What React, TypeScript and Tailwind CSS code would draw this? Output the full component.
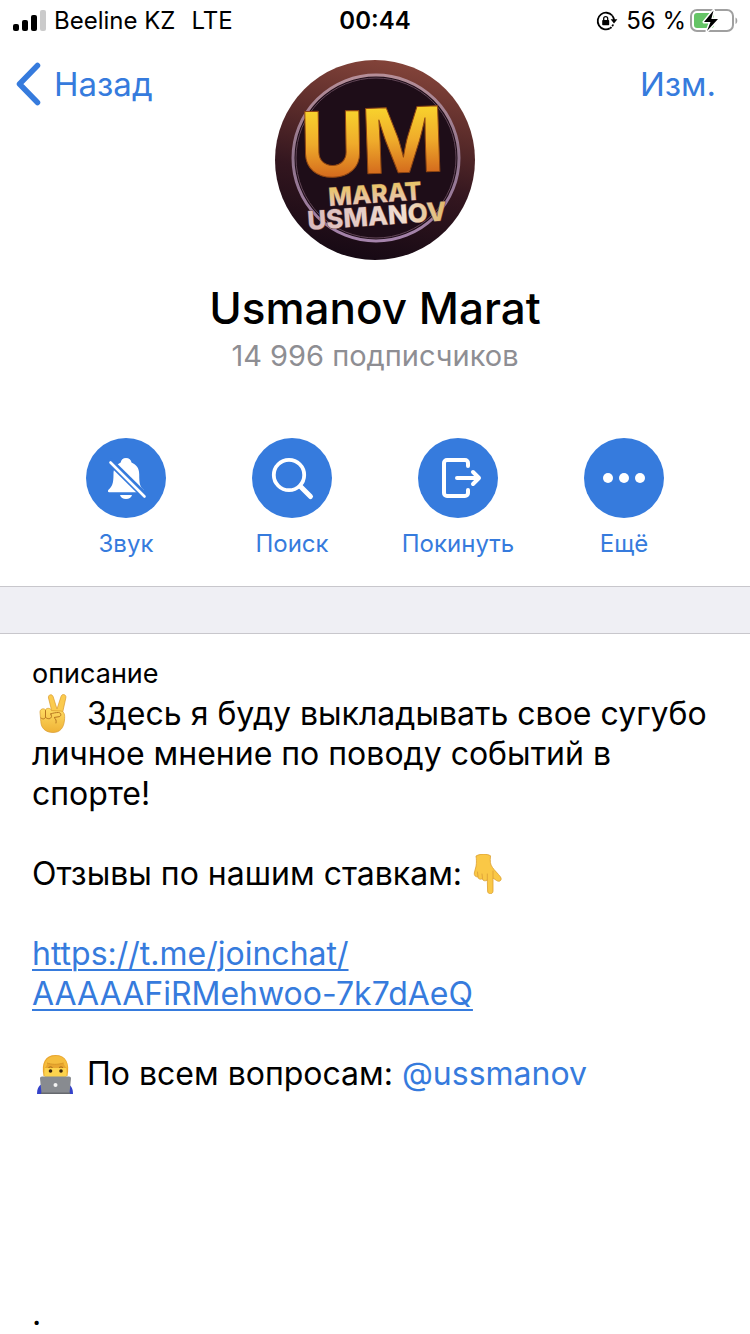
import type { ReactNode } from "react";

function SignalIcon() {
  return (
    <svg width="34" height="22" viewBox="0 0 34 22" aria-hidden="true">
      <rect x="1" y="14" width="6" height="7" rx="2" />
      <rect x="10" y="10" width="6" height="11" rx="2" />
      <rect x="19" y="5" width="6" height="16" rx="2" />
      <rect x="28" y="0" width="6" height="21" rx="2" fill="#cbcbcb" />
    </svg>
  );
}

function RotationLockIcon() {
  return (
    <svg width="22" height="20" viewBox="0 0 22 20" aria-hidden="true">
      <path d="M13.800 17.400A8.300 8.300 0 1 1 16.200 4.500" fill="none" stroke="#000" strokeWidth="1.800" />
      <path d="M16.200 4.500a8.300 8.300 0 0 1 1.900 5.500" fill="none" stroke="#000" strokeWidth="1.800" />
      <path d="M17.200 13.500a8.300 8.300 0 0 1-3.400 3.900" fill="none" stroke="#000" strokeWidth="1.800" strokeDasharray="2 1" />
      <path d="M14.600 8.300h6.800L18 12.400z" />
      <rect x="6.200" y="9" width="7" height="5.200" rx="0.800" />
      <path d="M7.700 9.500V7.600a2 2 0 0 1 4 0v1.900" fill="none" stroke="#000" strokeWidth="1.300" />
    </svg>
  );
}

function BatteryIcon() {
  return (
    <svg width="48" height="24" viewBox="0 0 48 24" aria-hidden="true">
      <rect x="1" y="1" width="42" height="21" rx="6" fill="none" stroke="#a0a0a0" strokeWidth="2" />
      <path d="M45.5 8.5c2.4 1 2.4 5.500 0 6.500z" fill="#a0a0a0" />
      <rect x="4" y="4" width="20" height="15" rx="3" fill="#65c466" />
      <path
        d="M23.500 1.500L14 13h6.500L17 22 28 10h-6.700z"
        fill="#000"
        stroke="#fff"
        strokeWidth="3"
        strokeLinejoin="round"
        paintOrder="stroke"
      />
    </svg>
  );
}

function Avatar() {
  return (
    <svg width="200" height="200" viewBox="0 0 200 200" role="img" aria-label="Usmanov Marat">
      <defs>
        <linearGradient id="rim" x1="0.6" y1="0" x2="0.4" y2="1">
          <stop offset="0" stopColor="#84443a" />
          <stop offset="0.3" stopColor="#5d2d2b" />
          <stop offset="0.6" stopColor="#33161f" />
          <stop offset="1" stopColor="#160914" />
        </linearGradient>
        <linearGradient id="ring" x1="0" y1="0" x2="0" y2="1">
          <stop offset="0" stopColor="#b58e98" />
          <stop offset="0.5" stopColor="#90748c" />
          <stop offset="1" stopColor="#a583ab" />
        </linearGradient>
        <linearGradient id="gold" x1="0" y1="0" x2="0" y2="1">
          <stop offset="0.2" stopColor="#f8d22d" />
          <stop offset="0.5" stopColor="#efab2b" />
          <stop offset="0.8" stopColor="#d46b1d" />
        </linearGradient>
        <linearGradient id="marat" x1="0" y1="0" x2="0" y2="1">
          <stop offset="0.1" stopColor="#e9c45a" />
          <stop offset="0.8" stopColor="#e8c5b5" />
        </linearGradient>
        <linearGradient id="usmanov" x1="0" y1="0" x2="1" y2="0">
          <stop offset="0" stopColor="#d9b9bb" />
          <stop offset="0.7" stopColor="#f0ddd0" />
          <stop offset="1" stopColor="#dfb667" />
        </linearGradient>
      </defs>
      <circle cx="100" cy="100" r="100" fill="url(#rim)" />
      <circle cx="101" cy="98" r="83" fill="#1e0d18" stroke="url(#ring)" strokeWidth="3" />
      <circle cx="101" cy="98" r="80" fill="none" stroke="#624657" strokeWidth="1" />
      <g fontFamily="Inter, sans-serif" fontWeight="700" strokeLinejoin="round">
        <g fontSize="90" fill="url(#gold)" stroke="#8e4512" strokeWidth="1">
          <text x="25" y="117" transform="rotate(-1 25 117)">U</text>
          <text x="87" y="114" transform="rotate(-2 87 114)">M</text>
        </g>
        <g stroke="#5c3a3a" strokeWidth="1" paintOrder="stroke" fontWeight="800">
          <text x="54" y="146" transform="rotate(-4 54 146)" fontSize="25" fill="url(#marat)">MARAT</text>
          <text x="33" y="170" transform="rotate(-4 33 170)" fontSize="26" fill="url(#usmanov)">USMANOV</text>
        </g>
      </g>
    </svg>
  );
}

function MuteIcon() {
  return (
    <svg width="80" height="80" viewBox="0 0 80 80" aria-hidden="true">
      <path
        d="M40 20c-3 0-5 2-5.300 4.400C30 26.500 27.500 30.500 27.500 36c0 10-1.500 12.500-4.500 15.200-1.500 1.400-1.500 3 .8 3h32.400c2.300 0 2.300-1.600.8-3-3-2.700-3.800-5.200-3.800-15.200 0-5.500-2.500-9.500-7.700-11.600C45.200 22 43 20 40 20z"
        fill="#fff"
      />
      <path d="M34 57h12c-.7 2.500-3 4-6 4s-5.300-1.500-6-4z" fill="#fff" />
      <path d="M23 22.500l38 37.500" stroke="#367bdd" strokeWidth="7" />
      <path d="M24.500 24.500l34 34" stroke="#fff" strokeWidth="2.600" strokeLinecap="round" />
    </svg>
  );
}

function SearchIcon() {
  return (
    <svg width="80" height="80" viewBox="0 0 80 80" fill="none" stroke="#fff" aria-hidden="true">
      <circle cx="37" cy="37" r="15.200" strokeWidth="3.800" />
      <path d="M48.500 48.500l10 10" strokeWidth="5" strokeLinecap="round" />
    </svg>
  );
}

function LeaveIcon() {
  return (
    <svg
      width="80"
      height="80"
      viewBox="0 0 80 80"
      fill="none"
      stroke="#fff"
      strokeWidth="4"
      strokeLinecap="round"
      strokeLinejoin="round"
      aria-hidden="true"
    >
      <path d="M50 28v-3a3 3 0 0 0-3-3H29a3 3 0 0 0-3 3v30a3 3 0 0 0 3 3h18a3 3 0 0 0 3-3v-3" />
      <path d="M39 40h22M55 34l6 6-6 6" />
    </svg>
  );
}

function MoreIcon() {
  return (
    <svg width="80" height="80" viewBox="0 0 80 80" fill="#fff" aria-hidden="true">
      <circle cx="24" cy="40" r="5" />
      <circle cx="40" cy="40" r="5" />
      <circle cx="56" cy="40" r="5" />
    </svg>
  );
}

function VictoryHand() {
  return (
    <svg className="inline-block align-top" width="46" height="40" viewBox="0 0 46 40" role="img" aria-label="Victory hand">
      <defs>
        <linearGradient id="skin" x1="0" y1="0" x2="0" y2="1">
          <stop offset="0" stopColor="#ffdc63" />
          <stop offset="1" stopColor="#efb236" />
        </linearGradient>
      </defs>
      <path
        d="M20 18L16.500 4c-.8-3.500 3.700-4.600 4.700-1.200L25 15l4-12.500c1.200-3.500 5.800-2 4.800 1.500L30.500 19z"
        fill="#fbcb4e"
        stroke="#d99a2c"
        strokeWidth="0.7"
      />
      <path
        d="M8 18c0-3 3.500-4.200 5.500-2.200 1-2 5-2.200 6 .8L29 17c3.500.8 4 4 3.500 9-.7 8-4.500 12.500-11.500 12.500-7.500 0-12-4.500-12.200-11z"
        fill="url(#skin)"
        stroke="#d99a2c"
        strokeWidth="0.7"
      />
      <path
        d="M13.500 16.500v7M9 24c2 1.800 4 .8 4.500-.8 2 2.200 5.500 2 6-.7l-.6-2.500M18.500 20c2.500-1 5.500-1.500 8-1.500 3 .3 3 3.800.5 4.200l-5 .8c2 1.300 2.500 3.300 2 5.500"
        fill="none"
        stroke="#b87720"
        strokeWidth="1"
        strokeLinecap="round"
      />
    </svg>
  );
}

function PointingDown() {
  return (
    <svg className="inline-block align-top" width="46" height="40" viewBox="4 0 46 40" role="img" aria-label="Pointing down">
      <path
        d="M9 2c5-2.700 11-2.300 14.500-.2-.5 5-.5 8.700 2 11.700 2 3 5.500 6 8 9.500 2 3-1 5.500-4 3.500l-3.500-2.500v13c0 3.700-5.400 3.700-5.400 0l-.3-11c-2 1.500-4.600.8-5-1.200-2 1-4.500 0-4.500-2-2.300.3-3.800-1.300-3.500-3.800l1.800-7C9.600 8.500 9.500 5 9 2z"
        fill="#fac846"
        stroke="#dc9f30"
        strokeWidth="0.8"
        strokeLinejoin="round"
      />
      <path d="M10.500 18l.5 4.500M15 20l.5 4.500M20.300 20v6M26 17v7" fill="none" stroke="#dca038" strokeWidth="0.9" strokeLinecap="round" />
    </svg>
  );
}

function Technologist() {
  return (
    <svg className="inline-block align-top" width="46" height="40" viewBox="0 0 46 40" role="img" aria-label="Technologist">
      <path d="M5 40c0-6 2-9 7-11h22c5 2 7 5 7 11z" fill="#3442c9" />
      <path d="M11.500 22C9 9 13 1 23.500 1S38 9 35.500 22z" fill="#e9a62f" />
      <path d="M12.500 14h22c1 13-2 19-11 19s-12-6-11-19z" fill="#fdd34d" />
      <path d="M12 14.500C12 6 17 2 24 2s11.500 4 11.500 12.500c-2-1-3.500-3.500-4-5.500-6 2-12 1.500-16 0-.5 2.500-1.700 4.500-3.500 5.500z" fill="#f5bd3e" />
      <path d="M15 9c4 1.500 10.500 2 16.500 0" fill="none" stroke="#d99828" />
      <circle cx="18.500" cy="17" r="1.800" fill="#3b240e" />
      <circle cx="29" cy="17" r="1.800" fill="#3b240e" />
      <path d="M16.500 13.500q2-1.300 4 0M27 13.500q2-1.300 4 0" fill="none" stroke="#a56d1b" />
      <path d="M10 22.500h27c1.300 0 2 .8 2 2L37.500 39h-28L8 24.500c0-1.200.8-2 2-2z" fill="#888b90" />
      <path d="M9 38.500h29V40H9z" fill="#66696e" />
      <circle cx="23.500" cy="31" r="2" fill="#f3f3f3" />
    </svg>
  );
}

const actions: { label: string; icon: ReactNode }[] = [
  { label: "Звук", icon: <MuteIcon /> },
  { label: "Поиск", icon: <SearchIcon /> },
  { label: "Покинуть", icon: <LeaveIcon /> },
  { label: "Ещё", icon: <MoreIcon /> },
];

export default function App() {
  return (
    <div className="flex min-h-screen flex-col bg-white font-['Inter','Liberation_Sans',sans-serif] text-black">
      <div className="grid h-10 grid-cols-[1fr_auto_1fr] items-center px-3 pt-px text-2xl">
        <div className="flex items-center gap-2">
          <SignalIcon />
          <span className="whitespace-nowrap">Beeline KZ</span>
          <span className="ml-2">LTE</span>
        </div>
        <div className="font-semibold">00:44</div>
        <div className="flex items-center justify-end gap-1">
          <RotationLockIcon />
          <span className="ml-1 whitespace-nowrap">56 %</span>
          <BatteryIcon />
        </div>
      </div>

      <header className="grid grid-cols-[1fr_auto_1fr] items-start px-4 pt-5 text-[#367bdd]">
        <button type="button" className="flex items-center gap-3 text-[33px] leading-12">
          <svg width="26" height="44" viewBox="0 0 26 44" fill="none" aria-hidden="true">
            <path
              d="M21.500 3.500L3.500 22l18 18.500"
              stroke="#367bdd"
              strokeWidth="5.500"
              strokeLinecap="round"
              strokeLinejoin="round"
            />
          </svg>
          Назад
        </button>
        <Avatar />
        <button type="button" className="justify-self-end pr-[18px] text-[33px] leading-12">
          Изм.
        </button>
      </header>

      <section className="border-b border-[#c8c7cc] px-[43px] pb-[26px] text-center">
        <h1 className="mt-5 text-[44px] leading-14 font-medium">Usmanov Marat</h1>
        <p className="text-[29px] leading-10 text-[#8e8e93]">14 996 подписчиков</p>
        <div className="mt-[62px] grid grid-cols-4">
          {actions.map((action) => (
            <button key={action.label} type="button" className="flex flex-col items-center gap-[10px] text-2xl text-[#367bdd]">
              <span className="rounded-full bg-[#367bdd]">{action.icon}</span>
              <span>{action.label}</span>
            </button>
          ))}
        </div>
      </section>

      <div className="h-[47px] border-b border-[#c8c7cc] bg-[#efeff4]" />

      <main className="grow px-8 pt-5 text-[32px] leading-10">
        <h2 className="text-[27px]">описание</h2>
        <p>
          <VictoryHand /> Здесь я буду выкладывать свое сугубо личное мнение по поводу событий в спорте!
        </p>
        <p className="mt-10">
          Отзывы по нашим ставкам: <PointingDown />
        </p>
        <p className="mt-10">
          <a href="https://t.me/joinchat/AAAAAFiRMehwoo-7k7dAeQ" className="text-[#367bdd] underline decoration-2 underline-offset-4">
            https://t.me/joinchat/
            <br />
            AAAAAFiRMehwoo-7k7dAeQ
          </a>
        </p>
        <p className="mt-10">
          <Technologist /> По всем вопросам:{" "}
          <a href="https://t.me/ussmanov" className="text-[#367bdd]">
            @ussmanov
          </a>
        </p>
        <p className="mt-50">.</p>
      </main>
    </div>
  );
}
